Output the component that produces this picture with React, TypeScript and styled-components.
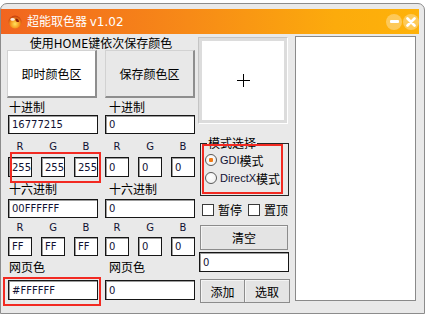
import React from "react";
import styled, { createGlobalStyle } from "styled-components";

const GlobalStyle = createGlobalStyle`
  html, body {
    margin: 0;
    padding: 0;
    background: #ffffff;
  }
  body {
    font-family: "Noto Sans CJK SC", "Liberation Sans", sans-serif;
    font-size: 12px;
    color: #000;
  }
`;

const Window = styled.div`
  position: relative;
  box-sizing: border-box;
  margin-top: 3px;
  width: 425px;
  height: 311px;
  border: 1px solid #8c8c8c;
  border-radius: 7px 7px 0 0;
  background: #e9e9e9;
  padding: 5px 5px 0 0;
`;

const TitleBar = styled.div`
  height: 25px;
  display: flex;
  align-items: center;
  padding-left: 7px;
  background: linear-gradient(to right, #f1651f 0%, #f78a17 45%, #fcab0c 80%, #feb20a 100%);
`;

const TitleText = styled.span`
  margin-left: 5px;
  flex: 1;
  color: #ffffff;
  font-size: 12px;
  line-height: 25px;
`;

const TitleLatin = styled.span`
  font-family: "DejaVu Sans", "Liberation Sans", sans-serif;
  font-size: 12px;
`;

const WinButton = styled.div`
  width: 16px;
  height: 16px;
  margin-left: 1px;
  border-radius: 50%;
  background: rgba(255, 255, 255, 0.32);
  display: flex;
  align-items: center;
  justify-content: center;
`;

const MinBar = styled.div`
  width: 9px;
  height: 3px;
  border-radius: 1px;
  background: #ffffff;
`;

const Body = styled.div`
  display: flex;
  padding-left: 6px;
`;

const LeftPanel = styled.div`
  width: 188px;
  display: flex;
  flex-direction: column;
`;

const Header = styled.div`
  height: 16px;
  padding-top: 1px;
  box-sizing: border-box;
  line-height: 16px;
  text-align: center;
  font-size: 12px;
`;

const BigButtons = styled.div`
  display: grid;
  grid-template-columns: 90px 90px;
  column-gap: 8px;
  height: 48px;
`;

const BigButton = styled.div<{ $live?: boolean }>`
  box-sizing: border-box;
  border-style: solid;
  border-width: 1px 2px 2px 1px;
  border-color: #d2d2d2 #8e8e8e #8e8e8e #d2d2d2;
  background: ${(p) => (p.$live ? "#ffffff" : "#e8e8e8")};
  display: flex;
  align-items: center;
  justify-content: center;
  font-size: 12px;
`;

const Columns = styled.div`
  display: grid;
  grid-template-columns: 90px 90px;
  column-gap: 7px;
  margin-left: 1px;
`;

const Column = styled.div`
  display: flex;
  flex-direction: column;
`;

const Label = styled.div<{ $h: number; $lh: number; $pt?: number; $indent?: number }>`
  height: ${(p) => p.$h}px;
  box-sizing: border-box;
  padding-top: ${(p) => p.$pt ?? 0}px;
  padding-left: ${(p) => p.$indent ?? 0}px;
  line-height: ${(p) => p.$lh}px;
  font-size: 12px;
  white-space: nowrap;
`;

const Field = styled.div<{ $h: number }>`
  box-sizing: border-box;
  height: ${(p) => p.$h}px;
  background: #ffffff;
  border: 1px solid #161616;
  box-shadow: inset 1px 1px 0 #9c9c9c;
  padding-left: 3px;
  display: flex;
  align-items: center;
  font-family: "DejaVu Sans", "Liberation Sans", sans-serif;
  font-size: 10px;
  color: #111133;
  white-space: nowrap;
  overflow: hidden;
`;

const Triple = styled.div<{ $h: number; $pt?: number }>`
  display: grid;
  grid-template-columns: 24px 24px 24px;
  justify-content: space-between;
  height: ${(p) => p.$h}px;
  box-sizing: border-box;
  padding-top: ${(p) => p.$pt ?? 0}px;
`;

const Letter = styled.div<{ $lh: number }>`
  text-align: center;
  line-height: ${(p) => p.$lh}px;
  font-family: "DejaVu Sans", "Liberation Sans", sans-serif;
  font-size: 10px;
  color: #111133;
`;

const Middle = styled.div`
  width: 92px;
  margin-left: 3px;
  display: flex;
  flex-direction: column;
`;

const Preview = styled.div`
  box-sizing: border-box;
  margin-top: 3px;
  width: 90px;
  height: 87px;
  border: 1px solid #c4c4c4;
  border-right-color: #ffffff;
  border-bottom-color: #ffffff;
  box-shadow: inset 0 0 0 3px #dcdcdc;
  background: #ffffff;
  display: flex;
  align-items: center;
  justify-content: center;
`;

const Group = styled.fieldset`
  margin: 11px 0 0 2px;
  width: 89px;
  box-sizing: border-box;
  border: 1px solid #262626;
  padding: 0 0 8px 4px;
`;

const Legend = styled.legend`
  margin-left: 2px;
  padding: 0 1px;
  line-height: 16px;
  font-size: 12px;
`;

const RadioRow = styled.div`
  display: flex;
  align-items: center;
  height: 18px;
  font-size: 12px;
  white-space: nowrap;
`;

const RadioDot = styled.div<{ $on?: boolean }>`
  box-sizing: border-box;
  width: 12px;
  height: 12px;
  margin-right: 3px;
  border-radius: 50%;
  border: 1px solid #5a5a5a;
  background: radial-gradient(circle at 40% 40%, #ffffff 0%, #ececec 100%);
  display: flex;
  align-items: center;
  justify-content: center;
  &::after {
    content: "";
    width: 4px;
    height: 4px;
    border-radius: 1px;
    background: ${(p) => (p.$on ? "#f07a14" : "transparent")};
  }
`;

const Latin = styled.span`
  font-family: "Liberation Sans", sans-serif;
  font-size: 11px;
  color: #111133;
`;

const CheckRow = styled.div`
  display: flex;
  align-items: center;
  margin-top: 8px;
  padding-left: 4px;
  height: 12px;
  gap: 6px;
`;

const CheckItem = styled.div`
  display: flex;
  align-items: center;
  gap: 4px;
  font-size: 12px;
  line-height: 12px;
`;

const CheckBox = styled.div`
  box-sizing: border-box;
  width: 12px;
  height: 12px;
  border: 1px solid #3a3a3a;
  background: #ffffff;
`;

const PlainButton = styled.div<{ $h: number }>`
  box-sizing: border-box;
  height: ${(p) => p.$h}px;
  border: 1px solid #8c8c8c;
  box-shadow: inset 1px 1px 0 #f4f4f4;
  background: #e4e4e4;
  display: flex;
  align-items: center;
  justify-content: center;
  font-size: 12px;
`;

const ClearButton = styled(PlainButton)`
  margin: 9px 0 0 2px;
  width: 88px;
`;

const CountField = styled(Field)`
  margin: 2px 0 0 1px;
  width: 90px;
`;

const ButtonPair = styled.div`
  display: grid;
  grid-template-columns: 45px 45px;
  margin: 7px 0 0 2px;
  width: 89px;
  & > div + div {
    border-left: none;
  }
`;

const ListBox = styled.div`
  box-sizing: border-box;
  margin: 2px 0 0 5px;
  width: 121px;
  height: 265px;
  border: 1px solid #8a8a8a;
  background: #ffffff;
`;

const Mark = styled.div<{ $x: number; $y: number; $w: number; $h: number }>`
  position: absolute;
  box-sizing: border-box;
  left: ${(p) => p.$x - 1}px;
  top: ${(p) => p.$y - 4}px;
  width: ${(p) => p.$w}px;
  height: ${(p) => p.$h}px;
  border: 2px solid #f22a22;
  pointer-events: none;
`;

type ColumnProps = {
  dec: string;
  rgb: string[];
  hex: string;
  hexRgb: string[];
  web: string;
  indent: number;
};

function ColorColumn({ dec, rgb, hex, hexRgb, web, indent }: ColumnProps) {
  return (
    <Column>
      <Label $h={17} $lh={17} $indent={indent}>十进制</Label>
      <Field $h={19}>{dec}</Field>
      <Triple $h={23} $pt={3}>
        <Letter $lh={20}>R</Letter>
        <Letter $lh={20}>G</Letter>
        <Letter $lh={20}>B</Letter>
      </Triple>
      <Triple $h={20}>
        {rgb.map((v, i) => (
          <Field key={i} $h={20}>{v}</Field>
        ))}
      </Triple>
      <Label $h={22} $lh={24} $indent={indent}>十六进制</Label>
      <Field $h={19}>{hex}</Field>
      <Triple $h={19}>
        <Letter $lh={19}>R</Letter>
        <Letter $lh={19}>G</Letter>
        <Letter $lh={19}>B</Letter>
      </Triple>
      <Triple $h={19}>
        {hexRgb.map((v, i) => (
          <Field key={i} $h={19}>{v}</Field>
        ))}
      </Triple>
      <Label $h={24} $lh={22} $indent={indent}>网页色</Label>
      <Field $h={20}>{web}</Field>
    </Column>
  );
}

function AppIcon() {
  return (
    <svg width="14" height="14" viewBox="0 0 14 14">
      <defs>
        <radialGradient id="ball" cx="50%" cy="65%" r="60%">
          <stop offset="0" stopColor="#ffe35c" />
          <stop offset="0.55" stopColor="#f79a1e" />
          <stop offset="1" stopColor="#c9410f" />
        </radialGradient>
      </defs>
      <circle cx="7" cy="7" r="6.5" fill="url(#ball)" />
      <path d="M7.5 3.5 A3.5 3.5 0 0 1 11 7 L8.6 7 A1.6 1.6 0 0 0 7.5 5.6 Z" fill="#8a1c08" />
      <ellipse cx="4.6" cy="4.4" rx="2.2" ry="1.4" fill="#ffffff" opacity="0.85" />
    </svg>
  );
}

export default function App() {
  return (
    <>
      <GlobalStyle />
      <Window>
        <TitleBar>
          <AppIcon />
          <TitleText>
            超能取色器 <TitleLatin>v1.02</TitleLatin>
          </TitleText>
          <WinButton>
            <MinBar />
          </WinButton>
          <WinButton>
            <svg width="10" height="10" viewBox="0 0 10 10">
              <path d="M1.5 1.5 L8.5 8.5 M8.5 1.5 L1.5 8.5" stroke="#ffffff" strokeWidth="2.6" strokeLinecap="round" />
            </svg>
          </WinButton>
        </TitleBar>

        <Body>
          <LeftPanel>
            <Header>使用HOME键依次保存颜色</Header>
            <BigButtons>
              <BigButton $live>即时颜色区</BigButton>
              <BigButton>保存颜色区</BigButton>
            </BigButtons>
            <Columns>
              <ColorColumn
                dec="16777215"
                rgb={["255", "255", "255"]}
                hex="00FFFFFF"
                hexRgb={["FF", "FF", "FF"]}
                web="#FFFFFF"
                indent={1}
              />
              <ColorColumn dec="0" rgb={["0", "0", "0"]} hex="0" hexRgb={["0", "0", "0"]} web="0" indent={4} />
            </Columns>
          </LeftPanel>

          <Middle>
            <Preview>
              <svg width="13" height="13" viewBox="0 0 13 13">
                <path d="M6.5 0 V13 M0 6.5 H13" stroke="#000" strokeWidth="1" />
              </svg>
            </Preview>
            <Group>
              <Legend>模式选择</Legend>
              <RadioRow>
                <RadioDot $on />
                <Latin>GDI</Latin>模式
              </RadioRow>
              <RadioRow>
                <RadioDot />
                <Latin>DirectX</Latin>模式
              </RadioRow>
            </Group>
            <CheckRow>
              <CheckItem>
                <CheckBox />
                暂停
              </CheckItem>
              <CheckItem>
                <CheckBox />
                置顶
              </CheckItem>
            </CheckRow>
            <ClearButton $h={25}>清空</ClearButton>
            <CountField $h={20}>0</CountField>
            <ButtonPair>
              <PlainButton $h={24}>添加</PlainButton>
              <PlainButton $h={24}>选取</PlainButton>
            </ButtonPair>
          </Middle>

          <ListBox />
        </Body>

        <Mark $x={10} $y={152} $w={91} $h={31} />
        <Mark $x={202} $y={144} $w={81} $h={50} />
        <Mark $x={3} $y={277} $w={98} $h={29} />
      </Window>
    </>
  );
}
